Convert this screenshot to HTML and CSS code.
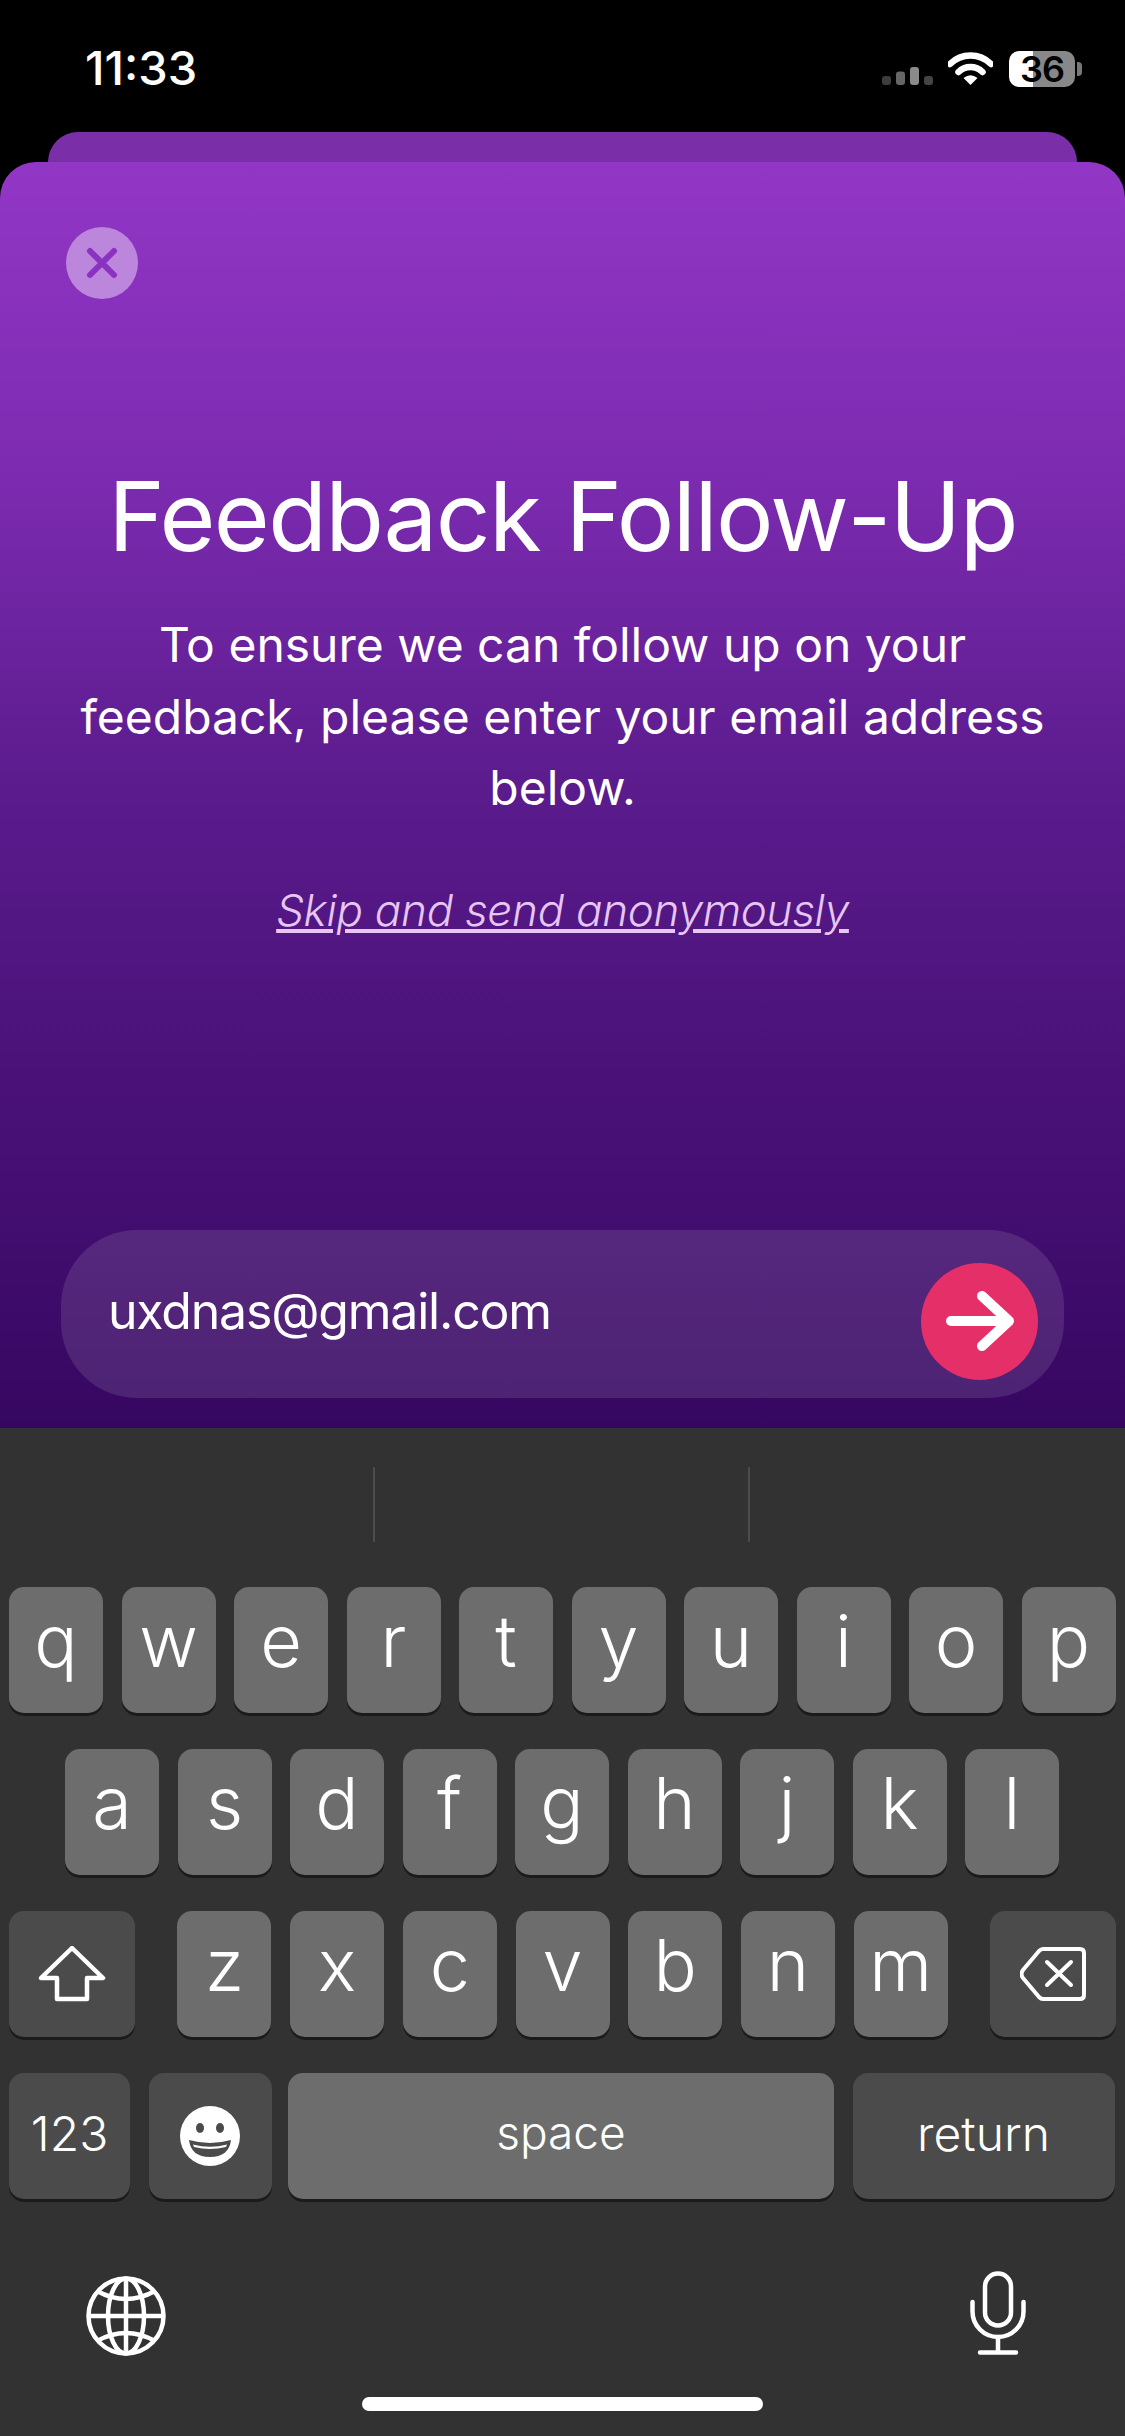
FILE: index.html
```html
<!DOCTYPE html>
<html lang="en">
<head>
    <meta charset="UTF-8">
    <meta name="viewport" content="width=device-width, initial-scale=1.0">
    <title>Feedback Follow-Up</title>
    <link rel="stylesheet" href="styles.css">
</head>
<body>
    <div class="status-bar">
        <span class="clock">11:33</span>
        <div class="status-icons">
            <svg class="signal" width="51" height="18" viewBox="0 0 51 18">
                <rect x="0" y="9" width="9" height="9" rx="3" fill="#3d3d3d"/>
                <rect x="14" y="4.500" width="9" height="13.500" rx="3" fill="#666"/>
                <rect x="28" y="0" width="9" height="18" rx="3" fill="#8a8a8a"/>
                <rect x="42" y="9" width="9" height="9" rx="3" fill="#444"/>
            </svg>
            <svg class="wifi" width="45" height="33" viewBox="0 0 45 33">
                <path d="M2 12 A29 29 0 0 1 43 12" fill="none" stroke="#fff" stroke-width="6.500" stroke-linecap="round"/>
                <path d="M10.500 20 A17 17 0 0 1 34.500 20" fill="none" stroke="#fff" stroke-width="6.500" stroke-linecap="round"/>
                <path d="M22.500 33 L15.500 26 Q22.500 20.500 29.500 26 Z" fill="#fff"/>
            </svg>
            <div class="battery"><span class="battery-level">36</span></div>
            <span class="battery-tip"></span>
        </div>
    </div>

    <div class="back-card"></div>
    <main class="card">
        <button class="close" type="button" aria-label="Close">
            <svg width="34" height="34" viewBox="0 0 34 34">
                <path d="M5 5 L29 29 M29 5 L5 29" stroke="#8a33c0" stroke-width="6" stroke-linecap="round"/>
            </svg>
        </button>
        <h1 class="title">Feedback Follow-Up</h1>
        <p class="intro">To ensure we can follow up on your<br>feedback, please enter your email address<br>below.</p>
        <a class="skip" href="#">Skip and send anonymously</a>
        <form class="email-form">
            <span class="email">uxdnas@gmail.com</span>
            <button class="send" type="button" aria-label="Send">
                <svg width="72" height="62" viewBox="0 0 72 62">
                    <path d="M7 31 H64 M38 6 L65 31 L38 56" fill="none" stroke="#fff" stroke-width="10" stroke-linecap="round" stroke-linejoin="round"/>
                </svg>
            </button>
        </form>
    </main>

    <section class="keyboard">
        <div class="suggestions">
            <span class="divider"></span>
            <span class="divider"></span>
        </div>

        <div class="key-row">
            <div class="key">q</div><div class="key">w</div><div class="key">e</div><div class="key">r</div><div class="key">t</div>
            <div class="key">y</div><div class="key">u</div><div class="key">i</div><div class="key">o</div><div class="key">p</div>
        </div>
        <div class="key-row row-middle">
            <div class="key">a</div><div class="key">s</div><div class="key">d</div><div class="key">f</div><div class="key">g</div>
            <div class="key">h</div><div class="key">j</div><div class="key">k</div><div class="key">l</div>
        </div>
        <div class="key-row row-third">
            <div class="key key-dark key-wide">
                <svg width="68" height="56" viewBox="0 0 68 56">
                    <path d="M34 2 L65 32 H49 V53 H19 V32 H3 Z" fill="none" stroke="#fff" stroke-width="4.500" stroke-linejoin="round"/>
                </svg>
            </div>
            <div class="letters">
                <div class="key">z</div><div class="key">x</div><div class="key">c</div><div class="key">v</div>
                <div class="key">b</div><div class="key">n</div><div class="key">m</div>
            </div>
            <div class="key key-dark key-wide">
                <svg width="66" height="54" viewBox="0 0 66 54">
                    <path d="M23 2 H60 Q64 2 64 6 V48 Q64 52 60 52 H23 Q21 52 19 50 L3 31 Q0 27 3 23 L19 4 Q21 2 23 2 Z" fill="none" stroke="#fff" stroke-width="4"/>
                    <path d="M27 15 L51 38 M51 15 L27 38" stroke="#fff" stroke-width="4" stroke-linecap="round"/>
                </svg>
            </div>
        </div>
        <div class="key-row row-bottom">
            <div class="key key-dark key-123">123</div>
            <div class="key key-dark key-emoji">
                <svg width="62" height="60" viewBox="0 0 62 60">
                    <circle cx="31" cy="30" r="30" fill="#fff"/>
                    <ellipse cx="21" cy="22" rx="4" ry="5" fill="#4b4b4b"/>
                    <ellipse cx="41" cy="22" rx="4" ry="5" fill="#4b4b4b"/>
                    <path d="M10 34 Q31 40 52 34 Q50 51 31 51 Q12 51 10 34 Z" fill="#4b4b4b"/>
                    <path d="M14 38.500 Q31 43 48 38.500 L47 41 Q31 45 15 41 Z" fill="#fff"/>
                </svg>
            </div>
            <div class="key key-space">space</div>
            <div class="key key-dark key-return">return</div>
        </div>

        <div class="keyboard-tools">
            <svg width="80" height="80" viewBox="0 0 80 80">
                <g fill="none" stroke="#fff" stroke-width="4.500">
                    <circle cx="40" cy="40" r="37.500"/>
                    <ellipse cx="40" cy="40" rx="18" ry="37.500"/>
                    <path d="M40 2 V78 M2 40 H78"/>
                    <path d="M11 15 Q40 31 69 15 M11 65 Q40 49 69 65"/>
                </g>
            </svg>
            <svg class="mic" width="56" height="84" viewBox="0 0 56 84">
                <g fill="none" stroke="#fff" stroke-width="4.500" stroke-linecap="round">
                    <rect x="15" y="2.500" width="26" height="52" rx="13"/>
                    <path d="M2.500 31 V40.500 A25.500 25.500 0 0 0 53.500 40.500 V31"/>
                    <path d="M28 66 V81 M10 81.500 H46"/>
                </g>
            </svg>
        </div>
        <div class="home-bar"></div>
    </section>
</body>
</html>
```

FILE: styles.css
```css
* {
    box-sizing: border-box;
}

body {
    margin: 0;
    width: 1125px;
    height: 2436px;
    overflow: hidden;
    background-color: #000;
    font-family: 'Inter', 'Liberation Sans', sans-serif;
    color: #fff;
}

.status-bar {
    height: 132px;
    padding: 41px 43px 0 85px;
    display: flex;
    justify-content: space-between;
    align-items: flex-start;
}

.clock {
    font-size: 47px;
    font-weight: 500;
    line-height: 54px;
}

.status-icons {
    display: flex;
    align-items: flex-start;
    margin-top: 10px;
}

.signal {
    margin-top: 16px;
    margin-right: 15px;
}

.wifi {
    margin-top: 1px;
    margin-right: 16px;
}

.battery {
    width: 66px;
    height: 36px;
    border-radius: 10px;
    background: linear-gradient(90deg, #fff 36%, #888 36%);
    color: #000;
    font-size: 36px;
    font-weight: 600;
    letter-spacing: -1px;
    line-height: 36px;
    text-align: center;
}

.battery-tip {
    width: 5px;
    height: 14px;
    margin: 11px 0 0 2px;
    border-radius: 0 4px 4px 0;
    background-color: #777;
}

.back-card {
    height: 30px;
    margin: 0 48px;
    border-radius: 30px 30px 0 0;
    background-color: #7a2fa8;
}

.card {
    height: 1266px;
    padding: 65px 61px 30px;
    border-radius: 36px 36px 0 0;
    background: linear-gradient(180deg, #9236c6 0%, #7c2bb0 25%, #5a1b8c 50%, #360761 100%);
    display: flex;
    flex-direction: column;
    align-items: center;
}

.close {
    width: 72px;
    height: 72px;
    margin-left: 5px;
    padding: 0;
    align-self: flex-start;
    border: none;
    border-radius: 50%;
    background-color: #bb86dc;
    display: flex;
    justify-content: center;
    align-items: center;
}

.title {
    margin: 159px 0 0;
    font-size: 96px;
    font-weight: 400;
    letter-spacing: -1.600px;
    line-height: 116px;
    white-space: nowrap;
}

.intro {
    margin: 35px -20px 0;
    font-size: 48px;
    font-weight: 400;
    line-height: 71.500px;
    text-align: center;
    white-space: nowrap;
}

.skip {
    margin-top: 59px;
    font-size: 44px;
    font-style: italic;
    font-weight: 300;
    letter-spacing: -0.300px;
    line-height: 54px;
    color: #e8c6f4;
}

.email-form {
    width: 1003px;
    height: 168px;
    margin-top: auto;
    padding: 0 26px 0 47px;
    border-radius: 76px;
    background-color: rgba(255, 255, 255, 0.11);
    display: flex;
    justify-content: space-between;
    align-items: center;
}

.email {
    margin-bottom: 6px;
    font-size: 50px;
    font-weight: 400;
    letter-spacing: -1.200px;
}

.send {
    width: 117px;
    height: 117px;
    margin-top: 14px;
    padding: 0;
    border: none;
    border-radius: 50%;
    background-color: #e42f68;
    display: flex;
    justify-content: center;
    align-items: center;
}

.keyboard {
    height: 1008px;
    background-color: #323232;
}

.suggestions {
    height: 159px;
    padding: 39px 0 0 373px;
    display: flex;
    gap: 373px;
}

.divider {
    width: 2px;
    height: 75px;
    background-color: #4c4c4c;
}

.key-row {
    height: 126px;
    margin-bottom: 36px;
    padding: 0 9px;
    display: flex;
    gap: 18.500px;
}

.row-middle {
    padding-left: 65px;
}

.row-third {
    justify-content: space-between;
}

.letters {
    display: flex;
    gap: 18.700px;
}

.key {
    width: 94px;
    height: 126px;
    border-radius: 15px;
    background-color: #6d6d6d;
    box-shadow: 0 3px 0 #1b1b1b;
    font-size: 72px;
    font-weight: 300;
    line-height: 108px;
    text-align: center;
    flex-shrink: 0;
}

.key-dark {
    background-color: #4b4b4b;
    display: flex;
    justify-content: center;
    align-items: center;
}

.key-wide {
    width: 126px;
}

.key-space {
    width: 546px;
    margin-left: -2px;
    font-size: 46px;
    line-height: 118px;
}

.key-123,
.key-return {
    font-size: 48px;
    line-height: 121px;
    display: block;
}

.key-123 {
    width: 121px;
}

.key-emoji {
    width: 123px;
}

.key-return {
    width: 262px;
}

.keyboard-tools {
    padding: 41px 99px 0 86px;
    display: flex;
    justify-content: space-between;
    align-items: flex-start;
}

.mic {
    margin-top: -5px;
}

.home-bar {
    width: 401px;
    height: 14px;
    margin: 41px auto 0;
    border-radius: 7px;
    background-color: #fff;
}
```
